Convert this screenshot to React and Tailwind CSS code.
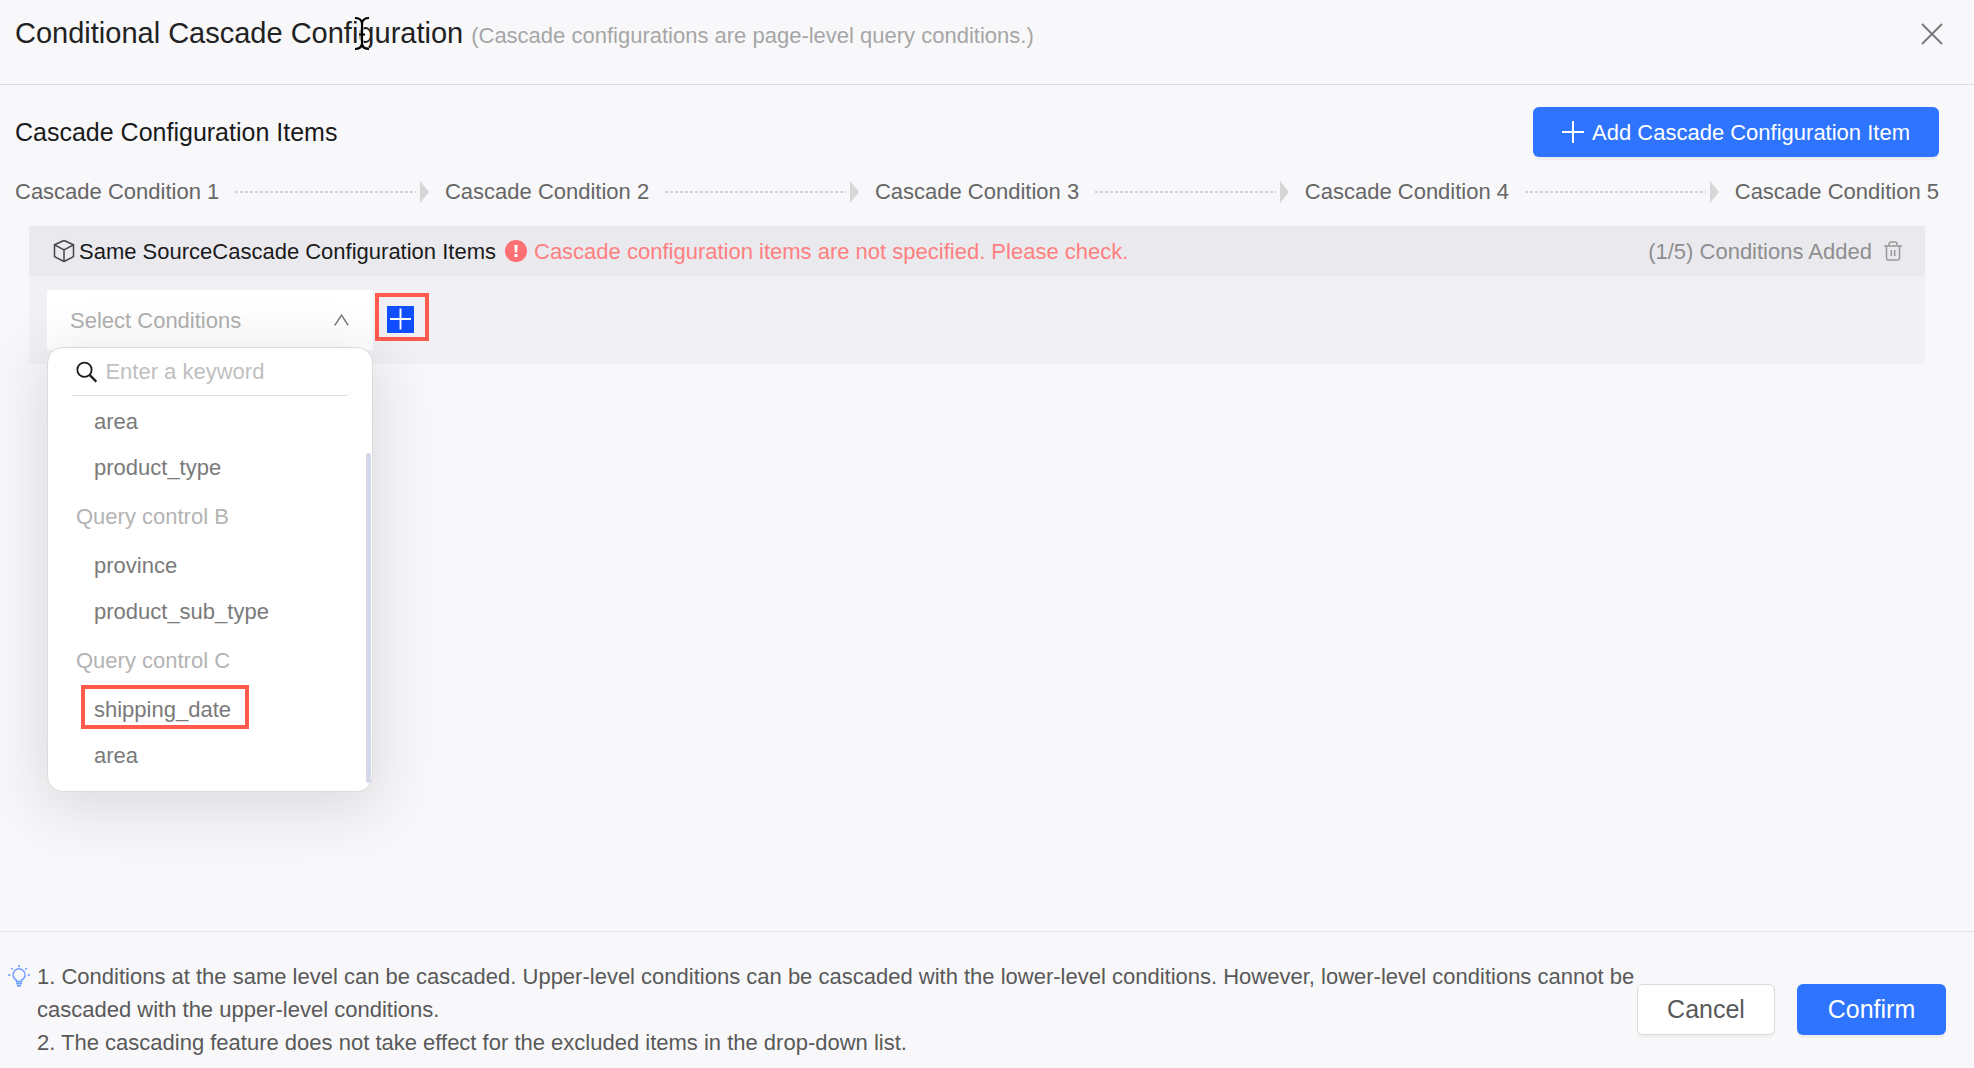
import React from "react";

const STEPS = [1, 2, 3, 4, 5];

const GROUPS = [
  { name: null, items: ["area", "product_type"] },
  { name: "Query control B", items: ["province", "product_sub_type"] },
  { name: "Query control C", items: ["shipping_date", "area"] },
];

function CloseIcon() {
  return (
    <svg width="22" height="22" viewBox="0 0 22 22" fill="none" stroke="#7b7b7d" strokeWidth="2" aria-hidden="true">
      <path d="M1 1l20 20M21 1L1 21" />
    </svg>
  );
}

function PlusIcon() {
  return (
    <svg width="22" height="22" viewBox="0 0 22 22" fill="none" stroke="white" strokeWidth="2" aria-hidden="true">
      <path d="M11 0v22M0 11h22" />
    </svg>
  );
}

function CubeIcon() {
  return (
    <svg width="22" height="24" viewBox="0 0 22 24" fill="none" stroke="#444" strokeWidth="1.5" strokeLinejoin="round" aria-hidden="true">
      <path d="M11 1.5l9.5 4.2v12L11 22.5l-9.5-4.8v-12z" />
      <path d="M1.5 5.9L11 10.8l9.5-4.9M11 10.8v11.5" />
    </svg>
  );
}

function AlertIcon() {
  return (
    <svg width="22" height="22" viewBox="0 0 22 22" aria-hidden="true">
      <circle cx="11" cy="11" r="11" fill="#ff7072" />
      <path d="M9.4 5h3.2l-.4 7.6H9.8z" fill="white" />
      <rect x="9.5" y="14" width="3" height="3" fill="white" />
    </svg>
  );
}

function TrashIcon() {
  return (
    <svg width="18" height="20" viewBox="0 0 18 20" fill="none" stroke="#999" strokeWidth="1.5" aria-hidden="true">
      <path d="M0 5h18M5 5V3.2Q5 1 7 1h4q2 0 2 2.2V5M2.5 5v12Q2.500 19 4.500 19h9q2 0 2-2V5M7.300 9v6M10.700 9v6" />
    </svg>
  );
}

function SearchIcon() {
  return (
    <svg width="24" height="24" viewBox="0 0 24 24" fill="none" stroke="#1c1c1c" strokeWidth="2" aria-hidden="true">
      <circle cx="9.500" cy="9.500" r="8" />
      <path d="M15.200 15.200l7.600 7.600" strokeWidth="2.600" />
    </svg>
  );
}

function BulbIcon() {
  return (
    <svg width="22" height="22" viewBox="0 0 22 22" fill="none" stroke="#6a9cff" strokeWidth="1.500" aria-hidden="true">
      <path d="M8.500 16.500v-1.200a6 6 0 1 1 5 0v1.200z" />
      <path d="M11 0v2.200M3.200 3l1.500 1.500M18.800 3l-1.500 1.500M0 10h2.400M19.600 10H22" />
      <path d="M8 18.500h6" strokeWidth="1.800" />
      <path d="M9 20.800h4" strokeWidth="1.800" />
    </svg>
  );
}

function TextCursor() {
  return (
    <svg className="absolute left-[353px] top-[16px]" width="18" height="35" viewBox="0 0 18 35" fill="none" aria-hidden="true">
      <path d="M2 2q6 0 7 5q1-5 7-5M9 7v21M2 33q6 0 7-5q1 5 7 5M6 18.500h6" stroke="white" strokeWidth="4" opacity="0.600" />
      <path d="M2 2q6 0 7 5q1-5 7-5M9 7v21M2 33q6 0 7-5q1 5 7 5M6 18.500h6" stroke="black" strokeWidth="2.200" />
    </svg>
  );
}

function Steps() {
  return (
    <ol className="mt-[17px] flex items-center text-[22px] leading-9 text-[#666]">
      {STEPS.map((n) => (
        <li key={n} className={n < 5 ? "flex flex-1 items-center" : "flex items-center"}>
          <span className="whitespace-nowrap">Cascade Condition {n}</span>
          {n < 5 && (
            <span className="ml-4 mr-4 flex flex-1 items-center gap-1">
              <span className="h-0.5 flex-1 bg-[repeating-linear-gradient(to_right,#d2d2d4_0_3px,transparent_3px_5px)]" />
              <svg width="9" height="22" viewBox="0 0 9 22" fill="#d6d6d8" aria-hidden="true">
                <path d="M0 0l9 11-9 11z" />
              </svg>
            </span>
          )}
        </li>
      ))}
    </ol>
  );
}

function ConditionMenu() {
  return (
    <div className="absolute left-0 top-[57px] z-10 w-full rounded-2xl border border-[#dcdcde] bg-white pb-[13px] shadow-[0_12px_60px_8px_rgba(0,0,0,0.11)]">
      <label className="mx-[23px] flex h-12 items-center gap-2 rounded border-b border-[#dedee0] pl-[5px]">
        <SearchIcon />
        <input
          type="text"
          aria-label="Search conditions"
          placeholder="Enter a keyword"
          className="w-full min-w-0 bg-transparent text-[22px] placeholder:text-[#bfbfbf] focus:outline-none"
        />
      </label>
      <div className="pt-0.5">
        {GROUPS.map((group, i) => (
          <div key={i}>
            {group.name && <p className="flex h-[52px] items-center pl-[28px] text-[22px] text-[#b3b3b3]">{group.name}</p>}
            {group.items.map((item) => (
              <button key={item} type="button" className="relative flex h-[46px] w-full items-center pl-[46px] text-[22px] text-[#7a7a7a]">
                {item}
                {item === "shipping_date" && <span className="absolute -top-px left-[33px] h-11 w-[168px] border-4 border-[#ff5b4d]" />}
              </button>
            ))}
          </div>
        ))}
      </div>
      <span className="absolute bottom-2 right-px h-[330px] w-[5px] rounded-full bg-[#d4d7e8]" />
    </div>
  );
}

export default function App() {
  return (
    <div className="flex min-h-screen flex-col bg-[#f8f8fa] font-['Liberation_Sans',Arial,sans-serif]">
      <header className="relative flex h-[85px] items-start justify-between border-b border-[#dcdcdf] pl-[15px] pr-[31px] pt-3">
        <div className="flex items-baseline gap-2 leading-[42px]">
          <h1 className="text-[29px] text-[#222]">Conditional Cascade Configuration</h1>
          <p className="text-[22px] text-[#a6a6a6]">(Cascade configurations are page-level query conditions.)</p>
        </div>
        <button type="button" aria-label="Close" className="mt-[11px]">
          <CloseIcon />
        </button>
        <TextCursor />
      </header>

      <main className="flex-1 pl-[15px] pr-[35px] pt-[22px]">
        <div className="flex items-center justify-between">
          <h2 className="mt-0.5 text-[25px] text-[#1a1a1a]">Cascade Configuration Items</h2>
          <button type="button" className="flex h-[50px] items-center gap-2 rounded-md bg-[#2e74ff] px-[29px] text-[22px] text-white shadow-[0_3px_0_rgba(0,0,0,0.04)]">
            <PlusIcon />
            Add Cascade Configuration Item
          </button>
        </div>
        <Steps />

        <section className="mx-[14px] mt-4 bg-[#f1f0f5]">
          <div className="flex h-[50px] items-center bg-[#eaeaee] pl-6 pr-[23px] text-[22px]">
            <CubeIcon />
            <h3 className="ml-1 text-[#1a1a1a]">Same SourceCascade Configuration Items</h3>
            <span className="ml-[9px]">
              <AlertIcon />
            </span>
            <p className="ml-[7px] text-[#ff7f80]">Cascade configuration items are not specified. Please check.</p>
            <span className="ml-auto text-[#8e8e90]">(1/5) Conditions Added</span>
            <button type="button" aria-label="Delete" className="ml-3">
              <TrashIcon />
            </button>
          </div>
          <div className="flex items-start gap-0.5 pb-[14px] pl-[18px] pt-[14px]">
            <div className="relative w-[326px]">
              <select aria-label="Select Conditions" defaultValue="" className="block h-[60px] w-full appearance-none bg-white pl-[23px] text-[22px] text-[#b0b0b0]">
                <option value="">Select Conditions</option>
              </select>
              <svg className="pointer-events-none absolute right-6 top-6" width="15" height="12" viewBox="0 0 15 12" fill="none" stroke="#777" strokeWidth="1.500" aria-hidden="true">
                <path d="M.8 11.300L7.500 1.200l6.700 10.100" />
              </svg>
              <ConditionMenu />
            </div>
            <div className="mt-[3px] flex h-12 w-[54px] items-center justify-center border-4 border-[#ff5b4d] pr-[3px] pt-1">
              <button type="button" aria-label="Add condition" className="flex h-[27px] w-[27px] items-center justify-center bg-[#104eff] p-[3px]">
                <PlusIcon />
              </button>
            </div>
          </div>
        </section>
      </main>

      <footer className="flex items-center justify-between border-t border-[#e4e4e7] pb-[9px] pl-2 pr-7 pt-7">
        <div className="flex items-start gap-[7px] text-[#595959]">
          <span className="mt-[5px] shrink-0">
            <BulbIcon />
          </span>
          <div className="max-w-[1600px] text-[22px] leading-[33px]">
            <p>
              1. Conditions at the same level can be cascaded. Upper-level conditions can be cascaded with the lower-level conditions. However, lower-level conditions cannot be cascaded with the upper-level conditions.
            </p>
            <p>2. The cascading feature does not take effect for the excluded items in the drop-down list.</p>
          </div>
        </div>
        <div className="flex shrink-0 gap-[22px] text-[25px]">
          <button type="button" className="h-[51px] w-[138px] rounded-md border border-[#d9d9d9] bg-white text-[#595959] shadow-[0_3px_0_rgba(0,0,0,0.03)]">Cancel</button>
          <button type="button" className="h-[51px] w-[149px] rounded-md bg-[#2e74ff] text-white shadow-[0_3px_0_rgba(0,0,0,0.04)]">Confirm</button>
        </div>
      </footer>
    </div>
  );
}
